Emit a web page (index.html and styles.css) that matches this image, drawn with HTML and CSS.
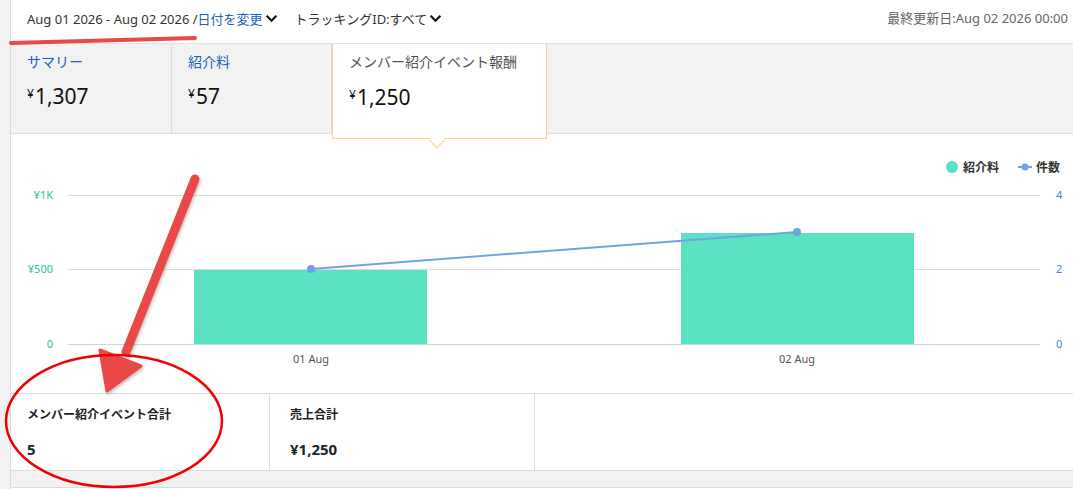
FILE: index.html
```html
<!DOCTYPE html>
<html lang="ja">
<head>
<meta charset="utf-8">
<title>レポート</title>
<link rel="stylesheet" href="styles.css">
</head>
<body>
<div class="page">
  <header class="topbar">
    <div class="filters">
      <span class="range">Aug 01 2026 - Aug 02 2026 /<a class="link">日付を変更</a><svg class="chev" viewBox="0 0 12 8"><path d="M1.5 1.5 6 6 10.5 1.5"/></svg></span>
      <span class="tracking">トラッキングID:すべて<svg class="chev" viewBox="0 0 12 8"><path d="M1.5 1.5 6 6 10.5 1.5"/></svg></span>
    </div>
    <div class="updated">最終更新日:Aug 02 2026 00:00</div>
  </header>

  <section class="panel">
    <div class="tabs">
      <div class="tab">
        <div class="tab-title">サマリー</div>
        <div class="tab-value"><span class="yen">¥</span>1,307</div>
      </div>
      <div class="tab">
        <div class="tab-title">紹介料</div>
        <div class="tab-value"><span class="yen">¥</span>57</div>
      </div>
      <div class="tab active">
        <div class="tab-title">メンバー紹介イベント報酬</div>
        <div class="tab-value"><span class="yen">¥</span>1,250</div>
        <span class="pointer"></span>
      </div>
      <div class="tab-rest"></div>
    </div>

    <div class="chart">
      <svg width="1062" height="259" viewBox="0 0 1062 259" class="chart-svg">
        <!-- legend -->
        <circle cx="941" cy="33" r="6" fill="#5ae2c2"/>
        <text x="952" y="38" class="legend">紹介料</text>
        <line x1="1007" y1="33" x2="1021" y2="33" stroke="#6fa3e8" stroke-width="2"/>
        <circle cx="1014" cy="33" r="3.5" fill="#6fa3e8"/>
        <text x="1025" y="38" class="legend">件数</text>

        <!-- grid -->
        <line x1="57" y1="61.5" x2="1029" y2="61.5" stroke="#dcdcdc"/>
        <line x1="57" y1="135.5" x2="1029" y2="135.5" stroke="#dcdcdc"/>
        <line x1="57" y1="210.5" x2="1029" y2="210.5" stroke="#c7d4e2"/>

        <!-- left axis -->
        <text x="42" y="65" class="axis-left" text-anchor="end">¥1K</text>
        <text x="42" y="139" class="axis-left" text-anchor="end">¥500</text>
        <text x="42" y="214" class="axis-left" text-anchor="end">0</text>

        <!-- right axis -->
        <text x="1045" y="65" class="axis-right">4</text>
        <text x="1045" y="139" class="axis-right">2</text>
        <text x="1045" y="214" class="axis-right">0</text>

        <!-- bars -->
        <rect x="183" y="136" width="233" height="74" fill="#5ae2c2"/>
        <rect x="670" y="99" width="233" height="111" fill="#5ae2c2"/>

        <!-- count line -->
        <polyline points="300,135 786,98" fill="none" stroke="#6fa3e8" stroke-width="2"/>
        <circle cx="300" cy="135" r="4" fill="#6fa3e8"/>
        <circle cx="786" cy="98" r="4" fill="#6fa3e8"/>

        <!-- x axis -->
        <text x="300" y="229" class="axis-x" text-anchor="middle">01 Aug</text>
        <text x="786" y="229" class="axis-x" text-anchor="middle">02 Aug</text>
      </svg>
    </div>

    <div class="totals">
      <div class="total">
        <div class="total-title">メンバー紹介イベント合計</div>
        <div class="total-value">5</div>
      </div>
      <div class="total wide">
        <div class="total-title">売上合計</div>
        <div class="total-value">¥1,250</div>
      </div>
      <div class="total fill"></div>
    </div>
  </section>

  <section class="panel next"></section>
</div>

<!-- hand-drawn markup layer on top of the report -->
<svg class="markup" width="1073" height="489" viewBox="0 0 1073 489">
  <defs>
    <filter id="drop" x="-20%" y="-20%" width="140%" height="140%">
      <feDropShadow dx="1" dy="2" stdDeviation="1.5" flood-color="#000" flood-opacity="0.25"/>
    </filter>
  </defs>
  <path d="M11 43 L195 38" stroke="#e84a47" stroke-width="4" stroke-linecap="round" fill="none"/>
  <g filter="url(#drop)">
    <path d="M195 179 L126 352" stroke="#e84a47" stroke-width="9" stroke-linecap="round" fill="none"/>
    <path d="M107 391 L100 350 L141 366 Z" fill="#e84a47" stroke="#e84a47" stroke-width="3" stroke-linejoin="round"/>
  </g>
  <ellipse cx="114" cy="421" rx="108" ry="66" fill="none" stroke="#f00000" stroke-width="2.5"/>
</svg>
</body>
</html>
```

FILE: styles.css
```css
* {
  box-sizing: border-box;
}

html, body {
  margin: 0;
  padding: 0;
}

body {
  width: 1073px;
  height: 489px;
  overflow: hidden;
  background: #f2f2f2;
  font-family: "Noto Sans", "Noto Sans CJK JP", sans-serif;
  color: #111;
  position: relative;
}

.page {
  margin-left: 10px;
  border-left: 1px solid #dcdcdc;
  min-height: 489px;
}

/* top filter bar */
.topbar {
  height: 44px;
  background: #fff;
  border-bottom: 1px solid #e2e2e2;
  display: flex;
  align-items: center;
  justify-content: space-between;
  padding: 0 5px 0 16px;
  font-size: 13px;
}

.filters {
  display: flex;
  align-items: center;
  gap: 17px;
  margin-top: -6px;
}

.range, .tracking {
  display: flex;
  align-items: center;
  color: #333;
}

.link {
  color: #1c62b9;
}

.chev {
  width: 13px;
  height: 9px;
  margin-left: 2px;
  fill: none;
  stroke: #111;
  stroke-width: 2;
}

.updated {
  color: #666;
  margin-top: -8px;
}

/* report panel */
.panel {
  background: #fff;
  border-bottom: 1px solid #dcdcdc;
}

.tabs {
  display: flex;
  height: 90px;
  background: #f2f2f2;
  border-bottom: 1px solid #dcdcdc;
}

.tab {
  width: 161px;
  padding: 8px 16px 0;
  border-right: 1px solid #dcdcdc;
  position: relative;
}

.tab + .tab {
  width: 160px;
}

.tab.active {
  width: 215px;
  height: 95px;
  background: #fff;
  border: 1px solid #fad18a;
  border-top: none;
  z-index: 2;
}

.tab-title {
  font-size: 14px;
  line-height: 20px;
  color: #1c62b9;
}

.tab.active .tab-title {
  color: #555;
}

.tab-value {
  margin-top: 10px;
  font-size: 21px;
  line-height: 24px;
  color: #111;
}

.tab.active .tab-value {
  margin-top: 11px;
}

.yen {
  font-size: 12px;
  vertical-align: 6px;
  margin-right: 1px;
}

/* caret under the active tab */
.pointer {
  position: absolute;
  left: 98px;
  bottom: -8px;
  width: 12px;
  height: 12px;
  background: #fff;
  border-right: 1px solid #fad18a;
  border-bottom: 1px solid #fad18a;
  transform: rotate(45deg);
}

.tab-rest {
  flex: 1;
}

/* chart */
.chart {
  height: 259px;
  background: #fff;
}

.chart-svg {
  display: block;
  font-family: "Noto Sans", "Noto Sans CJK JP", sans-serif;
}

.legend {
  font-size: 12px;
  font-weight: 700;
  fill: #333;
}

.axis-left {
  font-size: 11px;
  fill: #2bbf9c;
}

.axis-right {
  font-size: 11px;
  fill: #4a83d8;
}

.axis-x {
  font-size: 11px;
  fill: #555;
}

/* totals row */
.totals {
  display: flex;
  height: 77px;
  border-top: 1px solid #dcdcdc;
}

.total {
  width: 259px;
  padding: 12px 16px 0;
  border-right: 1px solid #dcdcdc;
}

.total.wide {
  width: 265px;
  padding-left: 20px;
}

.total.fill {
  flex: 1;
  border-right: none;
}

.total-title {
  font-size: 12px;
  font-weight: 700;
  line-height: 18px;
  color: #222;
}

.total-value {
  margin-top: 15px;
  font-size: 15px;
  font-weight: 700;
  line-height: 20px;
  color: #222;
}

.next {
  margin-top: 16px;
  height: 20px;
  border-top: 1px solid #dcdcdc;
}

/* annotation overlay */
.markup {
  position: absolute;
  left: 0;
  top: 0;
  pointer-events: none;
}
```
